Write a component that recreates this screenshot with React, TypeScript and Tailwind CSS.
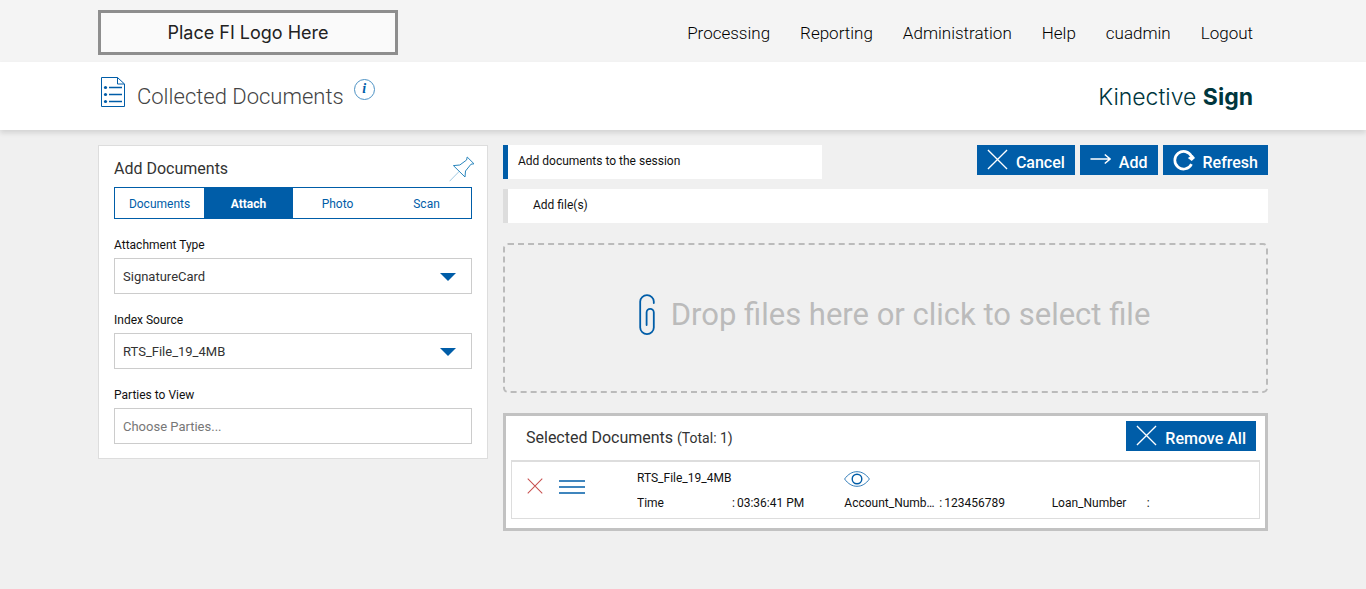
import React, { useState } from "react";

const NAV_LINKS = ["Processing", "Reporting", "Administration", "Help", "cuadmin", "Logout"];
const TABS = ["Documents", "Attach", "Photo", "Scan"];

const CrossIcon: React.FC<{ className?: string }> = ({ className }) => (
  <svg viewBox="0 0 22 22" className={className} fill="none" stroke="currentColor" strokeWidth="1.4" aria-hidden="true">
    <path d="M1 1 21 21M21 1 1 21" />
  </svg>
);

const ArrowIcon: React.FC = () => (
  <svg viewBox="0 0 22 22" className="size-[21px]" fill="none" stroke="currentColor" strokeWidth="1.6" aria-hidden="true">
    <path d="M0.5 10.5H21M15.5 5.8 21 10.5 15.5 15.2" />
  </svg>
);

const RefreshIcon: React.FC = () => (
  <svg viewBox="0 0 24 24" className="size-[22px]" fill="none" aria-hidden="true">
    <path d="M20.2 16.5A9.6 9.6 0 1 1 20.2 8" stroke="currentColor" strokeWidth="2.9" />
    <path d="M16.2 9.8 21.5 6.5 24 9.8 20.4 13.2Z" fill="currentColor" />
  </svg>
);

const DocumentIcon: React.FC = () => (
  <svg viewBox="0 0 24 30" className="h-[30px] w-6 text-[#005da8]" fill="none" stroke="currentColor" aria-hidden="true">
    <path d="M0.5 0.5H16.5L23.5 7V29.5H0.5Z" />
    <path d="M16.5 0.5V7H23.5" />
    <path d="M8 10.5H21M8 17.5H21M8 24.5H21" strokeWidth="1.4" />
    <g fill="currentColor" stroke="none">
      <circle cx="4.5" cy="10.5" r="1.6" />
      <circle cx="4.5" cy="17.5" r="1.6" />
      <circle cx="4.5" cy="24.5" r="1.6" />
    </g>
  </svg>
);

const PinIcon: React.FC = () => (
  <svg viewBox="0 0 26 26" className="size-[26px] text-[#2a86bd]" fill="none" stroke="currentColor" strokeLinejoin="round" aria-hidden="true">
    <path d="M18.2 1 25 7.8 22 8.2 16.5 15 16 21 4.4 9.6 10.8 9 17.6 4Z" />
    <path d="M10.2 15.4 0.6 25.2" strokeWidth="0.9" strokeOpacity="0.5" />
  </svg>
);

const ClipIcon: React.FC = () => (
  <svg viewBox="0 0 16 42" className="h-[42px] w-4 text-[#005da8]" fill="none" stroke="currentColor" strokeWidth="1.8" strokeLinecap="round" aria-hidden="true">
    <path d="M14.8 9V7.5A6.8 6.3 0 0 0 1.2 7.5V33.5A6.8 6.6 0 0 0 14.8 33.5V18.5A3.6 3.6 0 0 0 7.6 18.5V31" />
  </svg>
);

const EyeIcon: React.FC = () => (
  <svg viewBox="0 0 26 16" className="h-4 w-[26px] text-[#005da8]" fill="none" stroke="currentColor" aria-hidden="true">
    <path d="M0.6 8C4 3.2 8.2 0.7 13 0.7S22 3.2 25.4 8C22 12.8 17.8 15.3 13 15.3S4 12.8 0.6 8Z" strokeWidth="0.8" />
    <circle cx="13" cy="8" r="4.8" strokeWidth="1.4" />
  </svg>
);

type ActionButtonProps = { icon: React.ReactNode; label: string };

const ActionButton: React.FC<ActionButtonProps> = ({ icon, label }) => (
  <button type="button" className="flex h-[30px] items-start gap-2 bg-[#005da8] px-[10px] pt-1 text-base font-medium text-white">
    {icon}
    <span className="pt-[2px] leading-[23px]">{label}</span>
  </button>
);

type SelectFieldProps = { id: string; label: string; options: string[] };

const SelectField: React.FC<SelectFieldProps> = ({ id, label, options }) => (
  <div className="flex flex-col gap-1">
    <label htmlFor={id} className="text-xs leading-[18px]">{label}</label>
    <div className="relative">
      <select id={id} className="h-9 w-full appearance-none border border-[#ccc] bg-white px-2 pt-[2px] text-[13px] text-[#333]">
        {options.map((o) => (
          <option key={o}>{o}</option>
        ))}
      </select>
      <svg viewBox="0 0 16 8" className="pointer-events-none absolute top-[15px] right-4 h-2 w-4 text-[#005da8]" aria-hidden="true">
        <path d="M0 0H16L8 8Z" fill="currentColor" />
      </svg>
    </div>
  </div>
);

const DetailItem: React.FC<{ name: string; value: string }> = ({ name, value }) => (
  <div className="flex w-1/3 leading-[18px]">
    <dt className="mr-[3px] w-[92px] overflow-hidden text-ellipsis whitespace-nowrap">{name}</dt>
    <dd className="flex gap-[2px]">
      <span>:</span>
      <span>{value}</span>
    </dd>
  </div>
);

export default function App() {
  const [tab, setTab] = useState("Attach");

  return (
    <div className="min-h-screen bg-[#f0f0f0] font-['Roboto',sans-serif] text-xs text-[#111]">
      <header className="bg-[#f4f4f4]">
        <div className="mx-auto flex h-[62px] max-w-[1170px] items-center justify-between pt-[3px] pr-[15px]">
          <div className="flex h-[45px] w-[300px] items-center justify-center border-[3px] border-[#8e8e8e] bg-[#fafafa] font-['Inter',sans-serif] text-lg text-[#222]">
            Place FI Logo Here
          </div>
          <nav className="flex gap-[30px] pt-[2px] text-[17px] font-light text-black">
            {NAV_LINKS.map((link) => (
              <a key={link} href="#">{link}</a>
            ))}
          </nav>
        </div>
      </header>

      <div className="bg-white shadow-[0_3px_5px_rgba(0,0,0,0.12)]">
        <div className="mx-auto flex h-[68px] max-w-[1170px] items-center justify-between pr-[15px] pl-[3px]">
          <div className="flex items-center">
            <div className="pb-2">
              <DocumentIcon />
            </div>
            <h1 className="pt-[2px] pl-3 text-[22px] font-light text-[#444]">Collected Documents</h1>
            <button
              type="button"
              aria-label="Information"
              className="mb-[14px] ml-[10px] flex size-[21px] items-center justify-center rounded-full border border-[#4d92c4] font-['Liberation_Serif',serif] text-sm leading-none font-bold text-[#005da8] italic"
            >
              i
            </button>
          </div>
          <div className="pt-[2px] font-['Inter',sans-serif] text-[23px] text-[#00363d]">
            <span className="font-light">Kinective</span> <span className="font-bold">Sign</span>
          </div>
        </div>
      </div>

      <main className="mx-auto flex max-w-[1170px] items-start gap-[15px] pt-[15px] pb-10">
        <section className="w-1/3 border border-[#ddd] bg-white px-[15px] pt-2 pb-[14px]">
          <div className="flex h-[33px] items-start justify-between">
            <h2 className="pt-[3px] text-base text-[#333]">Add Documents</h2>
            <button type="button" aria-label="Pin panel" className="-mr-[3px] pt-[2px]">
              <PinIcon />
            </button>
          </div>
          <div className="flex h-8 border border-[#005da8] text-xs">
            {TABS.map((name) => (
              <button
                key={name}
                type="button"
                onClick={() => setTab(name)}
                className={tab === name ? "flex-1 bg-[#005da8] pt-px font-bold text-white" : "flex-1 pt-px text-[#005da8]"}
              >
                {name}
              </button>
            ))}
          </div>
          <div className="mt-[17px] flex flex-col gap-[17px]">
            <SelectField id="attachment-type" label="Attachment Type" options={["SignatureCard"]} />
            <SelectField id="index-source" label="Index Source" options={["RTS_File_19_4MB"]} />
            <div className="flex flex-col gap-1">
              <label htmlFor="parties" className="text-xs leading-[18px]">Parties to View</label>
              <input
                id="parties"
                type="text"
                placeholder="Choose Parties..."
                className="h-9 w-full border border-[#ccc] px-2 text-[13px] placeholder:text-[#777]"
              />
            </div>
          </div>
        </section>

        <div className="min-w-0 flex-1">
          <div className="flex items-start justify-between">
            <div className="h-[34px] w-[319px] border-l-[5px] border-[#005da8] bg-white px-[10px] leading-8">
              Add documents to the session
            </div>
            <div className="flex gap-[5px]">
              <ActionButton icon={<CrossIcon className="size-[21px]" />} label="Cancel" />
              <ActionButton icon={<ArrowIcon />} label="Add" />
              <ActionButton icon={<RefreshIcon />} label="Refresh" />
            </div>
          </div>

          <div className="mt-[10px] h-[34px] border-l-[5px] border-[#ddd] bg-white px-[25px] leading-8">Add file(s)</div>

          <label className="mt-5 flex h-[150px] cursor-pointer items-center justify-center gap-4 rounded-[5px] border-2 border-dashed border-[#bbb] pb-[7px] pl-[18px] text-[31px] text-[#bbb]">
            <input type="file" multiple className="sr-only" />
            <ClipIcon />
            Drop files here or click to select file
          </label>

          <section className="mt-5 border-[3px] border-[#c2c2c2] bg-white px-[5px] pt-[5px] pb-[9px]">
            <div className="flex items-start justify-between pr-1 pl-[15px]">
              <h2 className="pt-[5px] text-base text-[#333]">
                Selected Documents <span className="text-sm">(Total: 1)</span>
              </h2>
              <ActionButton icon={<CrossIcon className="size-[21px]" />} label="Remove All" />
            </div>
            <div className="mt-[9px] flex h-[59px] border border-t-2 border-[#ddd] pl-[15px]">
              <button type="button" aria-label="Remove document" className="self-start pt-4 text-[#c8504f]">
                <CrossIcon className="size-4" />
              </button>
              <button type="button" aria-label="Reorder document" className="ml-4 self-start pt-[18px] text-[#005da8]">
                <svg viewBox="0 0 26 14" className="h-[14px] w-[26px]" stroke="currentColor" strokeWidth="1.5" aria-hidden="true">
                  <path d="M0 1H26M0 7H26M0 13H26" />
                </svg>
              </button>
              <div className="ml-[52px] flex-1 pt-[7px]">
                <div className="flex leading-[18px]">
                  <span className="w-1/3">RTS_File_19_4MB</span>
                  <button type="button" aria-label="View document" className="pt-[2px]">
                    <EyeIcon />
                  </button>
                </div>
                <dl className="mt-[7px] flex">
                  <DetailItem name="Time" value="03:36:41 PM" />
                  <DetailItem name="Account_Number" value="123456789" />
                  <DetailItem name="Loan_Number" value="" />
                </dl>
              </div>
            </div>
          </section>
        </div>
      </main>
    </div>
  );
}
